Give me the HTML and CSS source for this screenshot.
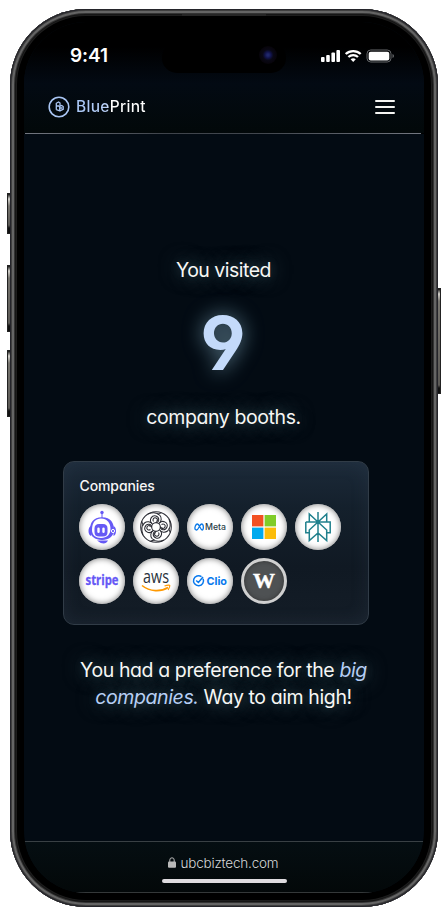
FILE: index.html
```html
<!DOCTYPE html>
<html lang="en">
<head>
<meta charset="utf-8">
<title>BluePrint</title>
<link rel="stylesheet" href="styles.css">
</head>
<body>
<div class="stage">
  <i class="key k1"></i><i class="key k2"></i><i class="key k3"></i><i class="key k4"></i>
  <div class="phone">
    <i class="speaker"></i>
    <div class="screen">
      <div class="island"><i class="lens"></i></div>
      <header class="top">
        <div class="status">
          <span class="time">9:41</span>
          <svg class="signals" width="74" height="14" viewBox="0 0 74 14">
            <g fill="#fff"><rect x="0" y="8" width="3.6" height="5" rx="1"/><rect x="5.2" y="6" width="3.6" height="7" rx="1"/><rect x="10.4" y="3.4" width="3.6" height="9.6" rx="1"/><rect x="15.4" y="1" width="3.6" height="12" rx="1"/></g>
            <g fill="none" stroke="#fff" stroke-width="2.3"><path d="M24.700 5A11 11 0 0 1 39.700 5"/><path d="M27.400 8A7 7 0 0 1 37 8"/></g>
            <path d="M32.200 13l-2.600-2.700a3.900 3.900 0 0 1 5.200 0z" fill="#fff"/>
            <rect x="46" y="1" width="24" height="12" rx="3.700" fill="none" stroke="#66686b"/>
            <rect x="47.700" y="2.700" width="20.600" height="8.700" rx="2" fill="#fff"/>
            <path d="M71.500 5v4q1.500-.5 1.500-2t-1.500-2" fill="#66686b"/>
          </svg>
        </div>
        <div class="nav">
          <div class="brand">
            <svg width="22" height="22" viewBox="0 0 22 22" fill="none" stroke="#a9c5f3"><circle cx="11" cy="11" r="9.800" stroke-width="1.600"/><path d="M8.300 13.800V7.300L10.600 6l1.400 1v2.600M8.300 10h2.400l1 .8v4L8.300 13.600M11.700 10.300l2-.8 1.500 1v2.900l-3.400 1.500M11.700 12h2.500" stroke-width="1.300"/></svg>
            <span class="brand-name">BluePrint</span>
          </div>
          <div class="menu"><i></i><i></i><i></i></div>
        </div>
      </header>
      <main>
        <p class="line visited"><span>You visited</span></p>
        <p class="count">9</p>
        <p class="line booths"><span>company booths.</span></p>
        <section class="card">
          <h2>Companies</h2>
          <div class="logos">
            <div class="logo"><svg viewBox="0 0 46 46"><g fill="#6659f5"><circle cx="23" cy="8.500" r="1.700"/><path d="M22.500 9h1v6h-1zM9.500 27q0-4 2.500-5v10q-2.500-1-2.500-5M37 27q0-4-2.500-5v10q2.500-1 2.500-5"/><path d="M23 13.300c9 0 12 6 12 12.500S30 36 23 36s-12-3.500-12-10.200 3-12.500 12-12.500"/><path d="M18 36.500h11q-1.500 3-4.500 3t-6.500-3"/></g><path d="M13 26c0-8 4-11.500 9-11.500 6 0 9.500 4.500 9.500 10.500 0 5-3.500 9-9.500 9-5.500 0-9-3-9-8" fill="#fff"/><path d="M20 20h4q4.500 0 4.500 4.500v3.500q0 4.500-4.500 4.500h-4q-4.500 0-4.500-4.500v-3.500q0-4.500 4.500-4.500" fill="#6659f5"/><rect x="18.300" y="23.500" width="2.400" height="5.500" rx="1.200" fill="#fff"/><rect x="23.300" y="23.500" width="2.400" height="5.500" rx="1.200" fill="#fff"/><circle cx="34" cy="27" r="1.600" fill="#6659f5" stroke="#fff"/></svg></div>
            <div class="logo"><svg viewBox="0 0 46 46"><g fill="none" stroke="#2b2c34" stroke-width="1.050"><circle cx="23" cy="23" r="15.300"/><circle cx="23" cy="23" r="4.300"/><g id="knot"><path d="M18.800 19.500C15.500 16 19 10.500 23 12c4 1.500 3.500 7-.5 6.500M20.500 17.500c-1.500-2 .5-4.500 2.500-3.500s2 3.500 0 3.200M15 10c4-1.500 9-2 12 1.500 2 2.500 1.500 6-1 8M28.500 9c-2 0-3 .7-4 1.500"/></g><use href="#knot" transform="rotate(90 23 23)"/><use href="#knot" transform="rotate(180 23 23)"/><use href="#knot" transform="rotate(270 23 23)"/></g></svg></div>
            <div class="logo"><svg viewBox="0 0 46 46"><path d="M8.200 25.500c-.9-2 .5-5.500 2.200-5.500 2 0 2.900 6 4.800 6 1.700 0 1.600-6-.6-6-2 0-3 6-5 6-.8 0-1.200-.2-1.400-.5" fill="none" stroke="#0878e8" stroke-width="1.300"/><text x="18" y="26.300" class="t-meta" textLength="21" lengthAdjust="spacingAndGlyphs">Meta</text></svg></div>
            <div class="logo"><svg viewBox="0 0 46 46"><path fill="#f25022" d="M11 11h11.400v11.400H11z"/><path fill="#80cc28" d="M23.600 11H35v11.400H23.600z"/><path fill="#00a9ee" d="M11 23.600h11.400V35H11z"/><path fill="#fbbc09" d="M23.600 23.600H35V35H23.600z"/></svg></div>
            <div class="logo"><svg viewBox="0 0 46 46"><path d="M23 8v30M14.300 18v-8L23 18l8.700-8v8M10.800 18h24.400v10.700h-3.500M14.300 28.700h-3.500V18M23 18l-8.700 8v10.500L23 29l8.700 7.500V26L23 18" fill="none" stroke="#20808d" stroke-width="1.500"/></svg></div>
            <div class="logo"><svg viewBox="0 0 46 46"><text x="6.500" y="27.300" class="t-stripe" textLength="33" lengthAdjust="spacingAndGlyphs">stripe</text></svg></div>
            <div class="logo"><svg viewBox="0 0 46 46"><text x="10" y="25.300" class="t-aws" textLength="26" lengthAdjust="spacingAndGlyphs">aws</text><path d="M9 27.500c8 6.500 19 6.500 26 2" fill="none" stroke="#ff9900" stroke-width="1.600"/><path d="M31.500 28q5-1.500 5.300-.5t-1.700 4.500" fill="none" stroke="#ff9900" stroke-width="1.200"/></svg></div>
            <div class="logo"><svg viewBox="0 0 46 46"><g fill="none" stroke="#0878ed" stroke-width="1.500"><path d="M14.500 18.700a5 5 0 1 0 1.600 2M9.200 22.500l2.200 2 4.600-5.500"/></g><text x="19.500" y="27" class="t-clio" textLength="20.500" lengthAdjust="spacingAndGlyphs">Clio</text></svg></div>
            <div class="logo dark"><svg viewBox="0 0 46 46"><text x="12" y="29.800" class="t-w" textLength="22" lengthAdjust="spacingAndGlyphs">W</text></svg></div>
          </div>
        </section>
        <p class="line summary"><span>You had a preference for the <em>big</em></span><br><span><em>companies.</em> Way to aim high!</span></p>
      </main>
      <footer>
        <div class="url"><svg width="8" height="11" viewBox="0 0 8 11"><rect y="4.500" width="8" height="6.200" rx="1" fill="#b9b9b9"/><path d="M1.800 5V3a2.200 2.200 0 0 1 4.400 0v2" fill="none" stroke="#b9b9b9"/></svg><span>ubcbiztech.com</span></div>
        <i class="home"></i>
      </footer>
    </div>
  </div>
</div>
</body>
</html>
```
FILE: styles.css
```css
* { box-sizing: border-box; }
body { margin: 0; background: #fff; font-family: Inter, "Liberation Sans", sans-serif; }
p, h2 { margin: 0; }
i { display: block; }
.stage { position: relative; width: 448px; height: 916px; padding: 9px 10px; overflow: hidden; }
.key { position: absolute; left: 7px; width: 4px; border: 1px solid #222; background: linear-gradient(#111 0, #d4d2cc 5px, #77756f 12px, #5b5955 calc(100% - 8px), #111 calc(100% - 5px)); }
.k1 { top: 193px; height: 41px; }
.k2 { top: 265px; height: 67px; }
.k3 { top: 350px; height: 67px; }
.k4 { left: 437px; top: 288px; height: 106px; }
.phone { position: relative; width: 428px; height: 898px; padding: 13px 14px 14px; border-radius: 76px; background: #000; box-shadow: inset 0 0 0 1px #24242a, inset 0 0 0 2px #3f3f3f, inset 0 0 0 4px #656565, inset 0 0 0 5px #333, inset 0 0 0 6px #151515, inset 0 0 0 7px #1d1d1d; }
.speaker { position: absolute; left: 172px; top: 5px; width: 84px; height: 2px; background: #262626; }
.screen { position: relative; height: 871px; display: flex; flex-direction: column; border-radius: 62px; overflow: hidden; background: #030b13; }
.island { position: absolute; left: 138px; top: 21px; width: 124px; height: 30px; border-radius: 16px; background: #000; }
.lens { position: absolute; right: 9px; top: 3px; width: 18px; height: 18px; border-radius: 50%; background: radial-gradient(circle, #20276b 0 8%, #11134b 24%, #090815 42%, #07040a 70%); }
.top { height: 112px; background: linear-gradient(90deg, #000 1px, #737780 1px, #3f444b 35%, #42474e 60%, #737780 397px, #000 397px) bottom / 100% 1px no-repeat, linear-gradient(#000 22%, #030a13 55%, #020809 100%); }
.status { height: 67px; display: flex; align-items: flex-start; justify-content: space-between; padding: 27px 29px 0 46px; }
.time { color: #fff; font-size: 19px; font-weight: 600; line-height: 14px; letter-spacing: -.1px; }
.nav { display: flex; align-items: center; justify-content: space-between; height: 35px; padding: 0 29px 0 24px; }
.brand { display: flex; align-items: center; gap: 6px; }
.brand-name { font-size: 15.500px; font-weight: 500; line-height: 22px; letter-spacing: .3px; color: transparent; background: linear-gradient(90deg, #a7c5f5, #b9d0f8 44%, #fff 50%); background-clip: text; -webkit-background-clip: text; }
.menu { display: flex; flex-direction: column; gap: 4px; padding-top: 1px; }
.menu i { width: 20px; height: 2px; border-radius: 1px; background: #f4f4f2; }
main { flex: 1; display: flex; flex-direction: column; align-items: center; font-feature-settings: "cv11", "cv04"; }
.line { color: #f7f7f5; font-size: 19.500px; line-height: 27px; letter-spacing: -.4px; text-align: center; text-shadow: 0 0 20px rgba(160,205,210,.6), 0 0 12px rgba(160,205,210,.15); white-space: nowrap; }
.visited { margin-top: 123px; padding-right: 1px; letter-spacing: -.5px; }
.count { margin-top: 18px; height: 82px; color: #c4dafa; font-size: 74px; font-weight: 700; line-height: 82px; padding-right: 2px; text-shadow: 0 0 20px rgba(155,205,230,.6); }
.booths { margin-top: 20px; padding-right: 1px; }
.card { width: 306px; height: 164px; margin: 30px 17px 0 0; padding: 16px 16px; border: 1px solid #313c47; border-radius: 11px; background: linear-gradient(#1c2a39, #14202c 28%, #101923 65%, #141d27); box-shadow: inset 0 0 18px rgba(70,90,110,.18); }
.card h2 { font-size: 14px; font-weight: 500; line-height: 16px; color: #f6f6f6; letter-spacing: -.1px; }
.logos { display: grid; grid-template-columns: repeat(5, 46px); gap: 8px; margin: 10px 0 0 -.5px; }
.logo { width: 46px; height: 46px; border-radius: 50%; background: #fff; box-shadow: inset 0 0 6px #777; }
.logo svg { display: block; width: 46px; height: 46px; overflow: visible; }
.dark { display: grid; place-items: center; background: #4e5153; border: 3px solid #d0d0d0; box-shadow: inset 0 0 4px #333; }
.dark svg { margin: -3px; }
.t-meta { font: 500 9px Inter; fill: #293e47; }
.t-stripe { font: 700 14px "Open Sans"; fill: #6557f5; stroke: #6557f5; stroke-width: .3px; }
.t-aws { font: 500 18px "Open Sans"; fill: #29323c; }
.t-clio { font: 700 11px Inter; fill: #0878ed; }
.t-w { font: 700 20px "Liberation Serif"; fill: #fff; stroke: #fff; stroke-width: .4px; }
.summary { margin-top: 32px; padding-right: 1px; }
.summary em { color: #b7cff5; }
footer { height: 52px; border-top: 1px solid #394044; border-bottom: 1px solid #343839; background: linear-gradient(#050e12, #030809); display: flex; flex-direction: column; align-items: center; }
.url { display: flex; align-items: center; gap: 5px; height: 17px; margin: 12px 2px 0 0; color: #d6d8d9; font-size: 13.500px; font-weight: 300; letter-spacing: -.2px; }
.home { width: 125px; height: 4px; margin-top: 8px; border-radius: 2px; background: #dedbdf; }
```
